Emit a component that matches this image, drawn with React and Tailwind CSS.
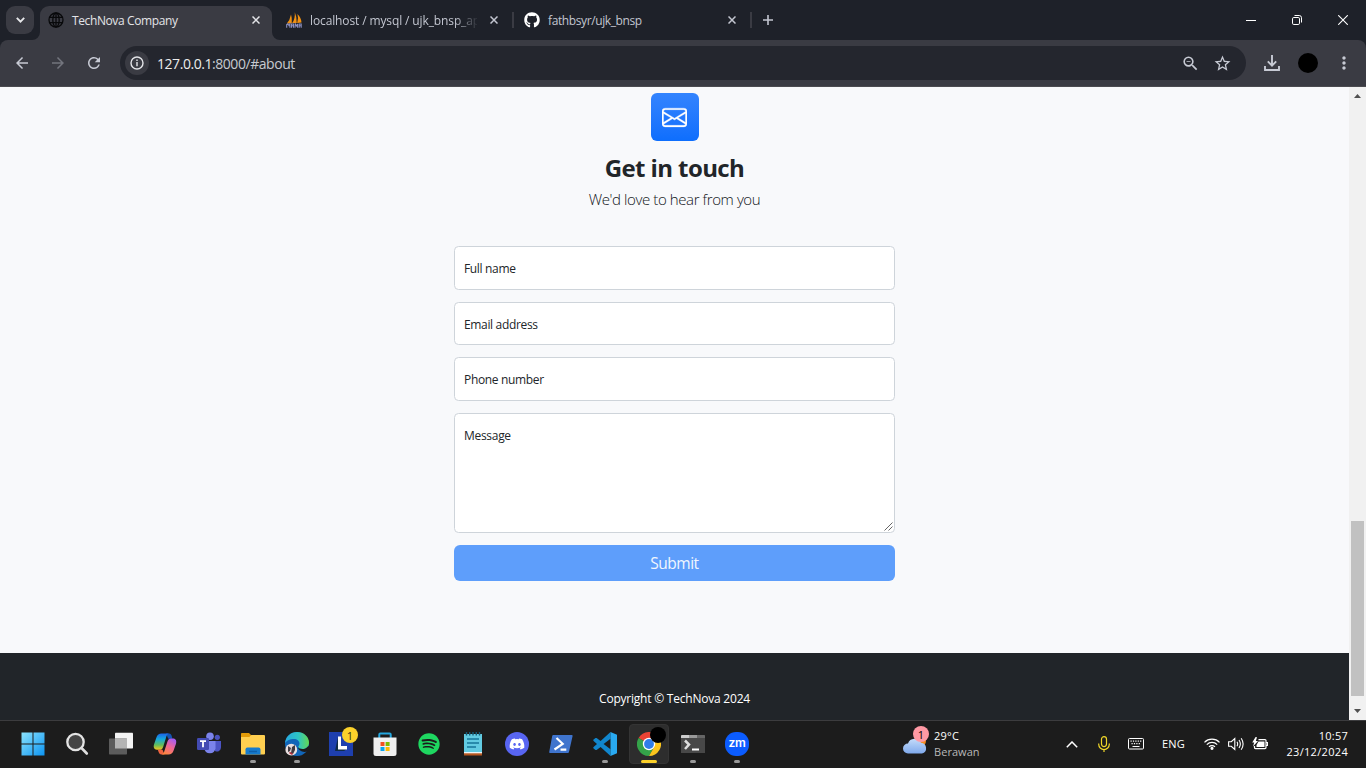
import React from 'react';
import { MdArrowBack, MdArrowForward, MdRefresh, MdZoomOut, MdStarBorder, MdMoreVert } from 'react-icons/md';
import { BsEnvelope } from 'react-icons/bs';
import { FaGithub, FaSpotify, FaDiscord } from 'react-icons/fa';

function Close({ className = '' }) {
  return (
    <svg className={`size-2 shrink-0 ${className}`} viewBox="0 0 8 8" stroke="currentColor" strokeWidth="1.5">
      <path d="M.5 .5l7 7M7.5 .5l-7 7" />
    </svg>
  );
}

function TabStrip() {
  return (
    <div className="flex h-10 items-start bg-[#1e2129] text-[12px] text-[#c3c6d0]">
      <div className="ml-[6px] mt-[6px] flex size-7 items-center justify-center rounded-[9px] bg-[#3a3b43]">
        <svg className="h-[6px] w-[9px]" viewBox="0 0 9 6" fill="none" stroke="#e6e7ea" strokeWidth="1.9"><path d="M.8 .9l3.7 3.7L8.2 .9" /></svg>
      </div>
      <div className="flex h-10 w-[244px] items-end pt-[6px] ml-[-2px]">
        <svg className="size-2 shrink-0" viewBox="0 0 8 8" fill="#3a3b43"><path d="M8 0v8H0a8 8 0 0 0 8-8z" /></svg>
        <div className="flex h-[34px] w-[232px] shrink-0 items-center rounded-t-[9px] bg-[#3a3b43] pb-[6px] pl-2 pr-3 text-[#e3e4e8]">
          <svg className="size-4 shrink-0" viewBox="0 0 16 16" fill="none" stroke="#08090b" strokeWidth="1.3">
            <circle cx="8" cy="8" r="7" /><ellipse cx="8" cy="8" rx="3.2" ry="7" /><path d="M8 1v14M1.6 5.4h12.8M1.6 10.6h12.8" />
          </svg>
          <span className="ml-2 mt-px whitespace-nowrap tracking-[-0.39px]">TechNova Company</span>
          <Close className="ml-auto" />
        </div>
        <svg className="size-2 shrink-0" viewBox="0 0 8 8" fill="#3a3b43"><path d="M0 0v8h8a8 8 0 0 1-8-8z" /></svg>
      </div>
      <div className="ml-[10px] flex h-10 w-[228px] items-center">
        <svg className="h-4 w-4 shrink-0" viewBox="0 0 16 16">
          <path d="M.8 11.500Q4 8 5 2.500Q6.200 6 5.800 11.200zM6.200 11Q9.300 7 8.800 .3Q11 5 10.700 11zM11.200 11Q12.800 6 11.400 2Q15 5 15.500 10.500z" fill="#f29111" />
          <path d="M.7 15.800v-3.300l1.200-.7 1 1.700 1-1.700v4M5.500 15.800v-3.800h2v3.800M5.500 13.800h2M9 15.800l.3-3.800 1.300 2 1-2v3.800M13.200 15.800v-3.800h2v3.800M13.200 13.800h2" fill="none" stroke="#8a8fc0" strokeWidth="1.100" />
        </svg>
        <span className="ml-2 mt-px w-[167px] whitespace-nowrap tracking-[-0.12px] [mask-image:linear-gradient(to_right,black_145px,transparent_169px)]">localhost / mysql / ujk_bnsp_ap</span>
        <Close className="ml-[13px]" />
        <div className="ml-[14px] h-4 w-[2px] bg-[#3a3b43]" />
      </div>
      <div className="ml-[10px] flex h-10 w-[228px] items-center">
        <FaGithub className="size-4 shrink-0 text-white" />
        <span className="ml-2 mt-px whitespace-nowrap tracking-[-0.39px]">fathbsyr/ujk_bnsp</span>
        <Close className="ml-auto" />
        <div className="ml-[14px] h-4 w-[2px] bg-[#3a3b43]" />
      </div>
      <svg className="ml-[11px] mt-[15px] size-[10px]" viewBox="0 0 10 10" stroke="#c3c6d0" strokeWidth="1.6"><path d="M5 0v10M0 5h10" /></svg>
      <div className="ml-auto flex h-10 items-center text-white">
        <div className="flex w-[46px] justify-center"><div className="h-px w-[10px] bg-white" /></div>
        <div className="flex w-[46px] justify-center">
          <svg className="size-[10px]" viewBox="0 0 10 10" fill="none" stroke="white"><rect x=".5" y="2.500" width="7" height="7" rx="1.300" /><path d="M2.500 .5h4.700a2.300 2.300 0 0 1 2.300 2.300v4.700" /></svg>
        </div>
        <div className="flex w-[46px] justify-center">
          <svg className="size-[10px]" viewBox="0 0 10 10" stroke="white" strokeWidth="1.1"><path d="M.2 .2l9.600 9.600M9.800 .2l-9.600 9.600" /></svg>
        </div>
      </div>
    </div>
  );
}

function Toolbar() {
  return (
    <div className="bg-[#1e2129]">
      <div className="flex h-[47px] items-center rounded-t-[8px] border-b border-[#4b4b50] bg-[#3a3b43] text-[#c7cad4]">
        <MdArrowBack className="ml-[13px] size-[18px]" />
        <MdArrowForward className="ml-[18px] size-[18px] text-[#73757e]" />
        <MdRefresh className="ml-[18px] size-[18px]" />
        <div className="ml-[17px] flex h-[34px] w-[1126px] items-center rounded-full bg-[#24262e] pl-[5px]">
          <div className="flex size-6 items-center justify-center rounded-full bg-[#3a3b43]">
            <svg className="size-[14px]" viewBox="0 0 14 14" fill="none" stroke="#e3e4e8" strokeWidth="1.4"><circle cx="7" cy="7" r="6" /><path d="M7 6v4.2M7 3.6v1.5" /></svg>
          </div>
          <span className="ml-2 whitespace-nowrap text-[14px] tracking-[-0.45px] text-[#c7cad0]"><span className="text-[#eceded]">127.0.0.1</span>:8000/#about</span>
          <MdZoomOut className="ml-auto size-[19px]" />
          <MdStarBorder className="ml-[13px] mr-[14px] size-[19px]" />
        </div>
        <svg className="ml-[18px] size-4" viewBox="0 0 16 16" fill="none" stroke="currentColor" strokeWidth="1.9"><path d="M8 0v10.3M3.8 6.4L8 10.6l4.2-4.2M1 11v4h14v-4" /></svg>
        <div className="ml-[18px] size-5 rounded-full bg-black" />
        <MdMoreVert className="ml-[16px] size-5" />
      </div>
    </div>
  );
}

function Field({ label, className }) {
  return <div className={`w-full rounded-[4.5px] border border-[#ced4da] bg-white pl-[9px] text-[12px] tracking-[-0.34px] text-[#212529] ${className}`}>{label}</div>;
}

function Page() {
  return (
    <div className="flex h-[633px] bg-[#f8f9fa]">
      <main className="flex w-[1349px] flex-col">
        <section className="flex h-[566px] flex-col items-center bg-[#f8f9fb] pt-[6px]">
          <div className="flex size-12 items-center justify-center rounded-[6px] bg-gradient-to-b from-[#3384fe] to-[#0d6efd]">
            <BsEnvelope className="size-[25px] stroke-white text-white [stroke-width:0.2]" />
          </div>
          <h1 className="mt-[13px] h-7 whitespace-nowrap text-[24px] font-bold leading-7 tracking-[-0.6px] text-[#212529]">Get in touch</h1>
          <p className="mt-[7px] h-5 whitespace-nowrap text-[15px] font-light leading-5 tracking-[-0.4px] text-[#101418]">We'd love to hear from you</p>
          <div className="mt-[37px] flex w-[441px] flex-col">
            <Field label="Full name" className="h-11 leading-[44px]" />
            <Field label="Email address" className="mt-3 h-[43px] leading-[44px]" />
            <Field label="Phone number" className="mt-3 h-11 leading-[44px]" />
            <div className="mt-3 flex h-[120px] items-start rounded-[4.5px] border border-[#ced4da] bg-white pl-[9px] text-[12px] leading-[44px] tracking-[-0.3px] text-[#212529]">
              Message
              <svg className="ml-auto mr-px mb-px size-[9px] self-end" viewBox="0 0 9 9" stroke="#666" strokeWidth="1"><path d="M.5 8.5l8-8M4.5 8.5l4-4" /></svg>
            </div>
            <button className="mt-3 h-9 rounded-[6px] bg-[#5e9efb] text-[15.5px] leading-9 tracking-[-0.5px] text-[#f0f6fe]">Submit</button>
          </div>
        </section>
        <footer className="flex h-[67px] justify-center bg-[#212529] pt-[37px] text-[12px] leading-[18px] text-white">
          <span className="whitespace-nowrap tracking-[-0.22px]">Copyright © TechNova 2024</span>
        </footer>
      </main>
      <div className="flex w-[17px] flex-col items-center bg-[#f1f1f1]">
        <svg className="mt-[7px] h-1 w-[7px]" viewBox="0 0 7 4" fill="#505050"><path d="M0 4L3.5 0 7 4z" /></svg>
        <div className="mt-[423px] h-[175px] w-[13px] bg-[#c1c1c1]" />
        <svg className="mt-[13px] h-1 w-[7px]" viewBox="0 0 7 4" fill="#505050"><path d="M0 0L3.5 4 7 0z" /></svg>
      </div>
    </div>
  );
}

function TaskbarApp({ children, dot, active }) {
  return (
    <div className="relative flex h-[47px] w-11 items-center justify-center pb-px">
      {active && <div className="absolute left-[2px] top-[3px] h-10 w-10 rounded-[4px] border border-[#343434] bg-[#2d2d2d]" />}
      <div className="relative flex size-6 items-center justify-center">{children}</div>
      {dot && <div className="absolute left-[19px] top-[39px] h-[3px] w-[6px] rounded-full bg-[#9a9a9a]" />}
      {active && <div className="absolute left-[14px] top-[39px] h-[3px] w-4 rounded-full bg-[#fcd12a]" />}
    </div>
  );
}

function TaskbarApps() {
  return (
    <div className="flex pl-[11px]">
      <TaskbarApp>
        <svg className="size-6" viewBox="0 0 24 24">
          <defs><linearGradient id="win" x1="0" y1="0" x2="1" y2="1" gradientUnits="objectBoundingBox"><stop stopColor="#8be3fd" /><stop offset="1" stopColor="#0c94f2" /></linearGradient></defs>
          <path fill="url(#win)" d="M.5 .5H11.5V11.5H.5zM12.5 .5H23.5V11.5H12.5zM.5 12.5H11.5V23.5H.5zM12.5 12.5H23.5V23.5H12.5z" />
        </svg>
      </TaskbarApp>
      <TaskbarApp>
        <svg className="size-6" viewBox="0 0 24 24"><circle cx="10.5" cy="10" r="8.2" fill="#454545" stroke="#e4e4e4" strokeWidth="2.3" /><path d="M16.5 16l5.3 5.5" stroke="#dedede" strokeWidth="2.6" strokeLinecap="round" /></svg>
      </TaskbarApp>
      <TaskbarApp>
        <svg className="size-6" viewBox="0 0 24 24"><rect x="6" y=".7" width="18" height="15.8" rx=".7" fill="#f3f3f3" /><rect x="0" y="6.5" width="18" height="16" rx=".7" fill="#5c5c5c" /><path d="M6 6.5h12v10H6z" fill="#b4b4b4" /></svg>
      </TaskbarApp>
      <TaskbarApp>
        <svg className="size-6" viewBox="0 0 24 24">
          <defs>
            <linearGradient id="coa" x1="0" y1="0" x2="0" y2="1"><stop stopColor="#1b63e8" /><stop offset=".35" stopColor="#15a9dc" /><stop offset=".7" stopColor="#60bd5c" /><stop offset="1" stopColor="#f7c61e" /></linearGradient>
            <linearGradient id="cob" x1=".7" y1="0" x2=".2" y2="1"><stop stopColor="#a65cf0" /><stop offset=".45" stopColor="#ee6599" /><stop offset="1" stopColor="#ff8838" /></linearGradient>
          </defs>
          <path d="M13 1.5h3.2c1.4 0 2 1 2.5 2.5l.8 2.7h-4.2z" fill="#1554b6" />
          <path d="M8.5 1.5h7.3c-1.8.8-2.3 2.5-2.9 4.5l-2.7 8.7c-.6 2-1.4 3.1-3.5 3.1H4c-2.9 0-3.8-2.5-3-5.2L3.6 5C4.4 2.7 6 1.5 8.5 1.5z" fill="url(#coa)" />
          <path d="M11.5 22.5H8.4c-1.5 0-2.3-1-2.8-2.5l-.8-2.3h4.7z" fill="#ef6340" />
          <path d="M15.5 22.5H8.8c1.8-.8 2.3-2.5 2.9-4.5l2.7-8.2c.6-2 1.4-3.3 3.5-3.3H20c2.9 0 3.8 2.5 3 5.2L20.4 19c-.8 2.3-2.4 3.5-4.9 3.5z" fill="url(#cob)" />
        </svg>
      </TaskbarApp>
      <TaskbarApp>
        <svg className="size-6" viewBox="0 0 24 24">
          <circle cx="20.3" cy="5.3" r="2.6" fill="#4a52bd" /><path d="M17 9h7v6.5a4 4 0 0 1-6 3.5z" fill="#4c54c4" />
          <circle cx="13" cy="4.3" r="3.8" fill="#7b83eb" /><path d="M8 9h10.5v7.2a5.7 5.7 0 0 1-11.3 0z" fill="#7b83eb" />
          <rect x="0" y="6" width="12" height="12" rx="1.2" fill="#434bb3" /><path d="M3 9.2h6M6 9v6.2" stroke="white" strokeWidth="1.8" />
        </svg>
      </TaskbarApp>
      <TaskbarApp dot>
        <svg className="size-6" viewBox="0 0 24 24">
          <path d="M0 1.7Q0 1 .8 1H8l2 2v4H0z" fill="#e39b09" /><path d="M0 5h8.3l2-2H23q1 0 1 1v17.4q0 1-1 1H1q-1 0-1-1z" fill="#ffcf50" />
          <path d="M4.5 22.4v-5q0-1.9 1.9-1.9h11.2q1.9 0 1.9 1.9v5z" fill="#167bcd" /><path d="M8 19.5h8" stroke="#0d5faa" strokeWidth="1.4" />
        </svg>
      </TaskbarApp>
      <TaskbarApp dot>
        <svg className="size-6" viewBox="0 0 24 24">
          <defs><linearGradient id="edge" x1="0" x2="1"><stop stopColor="#27a9df" /><stop offset=".55" stopColor="#2dc4c5" /><stop offset="1" stopColor="#63d852" /></linearGradient></defs>
          <circle cx="12" cy="12" r="12" fill="#1165b8" />
          <path d="M0 11.5C.5 4.500 5.500 0 12 0c7 0 12 5 12 10.500 0 4-3 6.500-6.500 6.500-3 0-4.300-1-4.300-2 0-.8 1.300-1.500 1.300-3.500 0-2.500-2.500-4.500-5.500-4.500C4.500 7 1 9 0 11.500z" fill="url(#edge)" />
          <path d="M13.200 15c.3 1.200 1.800 2 4.300 2 2.200 0 4.200-.9 5.500-2.600l1-.4v4.500l-2 1c-4 1.500-9.300-1.500-8.800-4.500z" fill="#1c1c1c" />
          <circle cx="6.300" cy="17.700" r="5.900" fill="#e8dfdf" /><path d="M3 14l3 2-1 3-2 1zM7 15l3-2v5l-2 4-2-1z" fill="#413a40" /><path d="M4.500 20.500l3 1.800" stroke="#b32735" strokeWidth="1.500" />
        </svg>
      </TaskbarApp>
      <TaskbarApp>
        <div className="relative size-6 bg-[#1e3fae]">
          <svg className="size-6" viewBox="0 0 24 24"><path d="M9 5L6 19l9 0 3-2H11z" fill="#102c46" /><path d="M9 4.500h3V14h6v3.500H9z" fill="white" /></svg>
          <div className="absolute left-[13px] top-[-5px] flex size-4 items-center justify-center rounded-full bg-[#fbd12b] text-[11px] leading-none text-[#342f17]">1</div>
        </div>
      </TaskbarApp>
      <TaskbarApp>
        <svg className="size-6" viewBox="0 0 24 24"><path d="M6.300 6V2.500q0-1 1-1h9.400q1 0 1 1V6" fill="none" stroke="#24a7df" strokeWidth="2" /><path d="M.5 5.500h23v16q0 2.500-2.500 2.500H3Q.5 24 .5 21.500z" fill="#f0f0f0" /><path d="M7.500 10H11.500V14H7.500z" fill="#f25022" /><path d="M12.600 10H16.600V14H12.600z" fill="#7fba00" /><path d="M7.500 15H11.500V19H7.500z" fill="#0aa4ee" /><path d="M12.600 15H16.600V19H12.600z" fill="#ffb900" /></svg>
      </TaskbarApp>
      <TaskbarApp><FaSpotify className="size-[22px] text-[#1ed760]" /></TaskbarApp>
      <TaskbarApp>
        <svg className="size-6" viewBox="0 0 24 24"><path d="M3 2h18v19H3z" fill="#62cbe2" /><path d="M3 21h18v2.500H3z" fill="#b8571f" /><path d="M3 20h18v1.300H3z" fill="#eaf5f8" /><path d="M5.500 0v3.500M8.700 0v3.500M12 0v3.500M15.300 0v3.500M18.500 0v3.500" stroke="#155c78" strokeWidth="1.400" /><path d="M6 7h12M6 11h12M6 15h9" stroke="#17779b" strokeWidth="1.600" /></svg>
      </TaskbarApp>
      <TaskbarApp><div className="flex size-6 items-center justify-center rounded-full bg-[#5865f2]"><FaDiscord className="size-4 text-white" /></div></TaskbarApp>
      <TaskbarApp>
        <svg className="size-6" viewBox="0 0 24 24"><path d="M4.200 3h18.600q1 0 .8 1l-3.600 16q-.2 1-1.200 1H1q-1 0-.8-1L3.200 4q.2-1 1-1z" fill="#3f74cd" /><path d="M7.500 6l6.200 5.800L5.500 17.500M11.500 17.700h5.800" fill="none" stroke="white" strokeWidth="2.200" /></svg>
      </TaskbarApp>
      <TaskbarApp dot>
        <svg className="size-6" viewBox="0 0 24 24"><path fillRule="evenodd" d="M17.500 0L7.600 9.100 3.600 6.100q-.6-.4-1.100 0L.6 7.600q-.7.700 0 1.400L4 12 .6 15q-.7.700 0 1.400l1.900 1.500q.5.400 1.100 0l4-3L17.500 24zM17.500 6.700v10.600L10.600 12z" fill="#1186cd" /><path d="M17.500 0L24 2.800v18.400L17.500 24z" fill="#29aaf1" /></svg>
      </TaskbarApp>
      <TaskbarApp active>
        <svg className="size-6" viewBox="0 0 24 24">
          <path d="M12 12L1.600 6A12 12 0 0 1 22.400 6z" fill="#ea4335" /><path d="M12 12L1.600 6A12 12 0 0 0 12 24L17.200 15z" fill="#34a349" /><path d="M12 6h10.400A12 12 0 0 1 12 24l5.200-9z" fill="#fbc51d" />
          <circle cx="12" cy="12" r="6.200" fill="white" /><circle cx="12" cy="12" r="4.900" fill="#2f7de9" />
        </svg>
        <div className="absolute left-[13px] top-[-5px] size-4 rounded-full bg-black" />
      </TaskbarApp>
      <TaskbarApp dot>
        <svg className="size-6" viewBox="0 0 24 24"><path d="M0 4q0-1 1-1h22q1 0 1 1v17H0z" fill="#484848" /><path d="M1 3h7v3H0V4q0-1 1-1z" fill="#ccc" /><path d="M8 3h8v3H8z" fill="#999" /><path d="M16 3h7q1 0 1 1v2h-8z" fill="#666" /><path d="M4 8.500l4 4-4 4.500" fill="none" stroke="#ddd" strokeWidth="2.500" /><path d="M11 17.500h7" stroke="white" strokeWidth="2" /></svg>
      </TaskbarApp>
      <TaskbarApp dot>
        <div className="flex size-6 items-center justify-center rounded-[11px] bg-[#0b5cff] pb-[2px] font-[Inter] text-[12px] font-semibold leading-none tracking-[-0.3px] text-white">zm</div>
      </TaskbarApp>
    </div>
  );
}

function Taskbar() {
  return (
    <div className="flex h-12 border-t border-[#3c3c3e] bg-[#1c1c1c] text-[11px] text-white">
      <TaskbarApps />
      <div className="relative ml-[143px] mt-[11px] size-[27px] shrink-0">
        <svg className="size-[27px]" viewBox="0 0 27 27">
          <defs><linearGradient id="cloud" x1="0" y1="0" x2="0" y2="1"><stop stopColor="#c4dcfa" /><stop offset="1" stopColor="#7fa9ec" /></linearGradient></defs>
          <circle cx="18" cy="9" r="6" fill="#f58c1e" /><path d="M6 21.500a5 5 0 0 1 0-10 7 7 0 0 1 13-.8 5.500 5.500 0 0 1 1 10.800z" fill="url(#cloud)" />
        </svg>
        <div className="absolute left-[11px] top-[-6px] flex size-4 items-center justify-center rounded-full bg-[#ff99a4] text-[11px] leading-none text-black">1</div>
      </div>
      <div className="ml-[5px] mt-[7px] flex w-[60px] flex-col leading-4"><span className="tracking-[0.2px]">29°C</span><span className="tracking-[0.05px] text-[#b8b8b8]">Berawan</span></div>
      <div className="ml-auto flex h-[47px] items-center pb-px">
        <svg className="h-[7px] w-3" viewBox="0 0 12 7" fill="none" stroke="white" strokeWidth="1.500"><path d="M.8 6.200L6 1l5.200 5.200" /></svg>
        <svg className="ml-5 h-4 w-3" viewBox="0 0 12 16" fill="none" stroke="#efd629" strokeWidth="1.200"><rect x="3.500" y=".6" width="5" height="10" rx="2.500" /><path d="M.7 7.500v.8a5.300 5.300 0 0 0 10.600 0v-.8M6 13.500V16" /></svg>
        <svg className="ml-[18px] h-3 w-4" viewBox="0 0 16 12" fill="none" stroke="white"><rect x=".5" y=".5" width="15" height="10.500" rx="1" /><path d="M2.500 3.200h11M3.500 5.700h9" strokeDasharray="1.200 1.200" strokeWidth="1.200" /><path d="M4.500 8.500h7" /></svg>
        <span className="ml-[18px] mt-px w-6 whitespace-nowrap tracking-[0.2px]">ENG</span>
        <svg className="ml-[18px] h-3 w-4" viewBox="0 0 16 12" fill="none" stroke="white" strokeWidth="1.200"><path d="M.5 4.300a10.500 10.500 0 0 1 15 0M2.800 6.600a7.300 7.300 0 0 1 10.400 0M5 8.900a4.200 4.200 0 0 1 6 0" /><circle cx="8" cy="10.300" r="1" fill="white" /></svg>
        <svg className="ml-2 h-[14px] w-4" viewBox="0 0 16 14" fill="none" stroke="white" strokeWidth="1.100"><path d="M.6 4.700h2.700L6.800 1.500v11L3.300 9.300H.6zM9 4.800q1.300 2.200 0 4.400M11 3q2.700 4 0 8M13.200 1.200q3.800 5.800 0 11.600" /></svg>
        <svg className="ml-2 h-[14px] w-4" viewBox="0 0 16 14" fill="none" stroke="white" strokeWidth="1.200"><path d="M6.500 2.600H13q1 0 1 1v7q0 1-1 1H3.500q-1 0-1-1V9M14 5.500h1.500v3H14" /><path d="M6.500 4.500h6v5.500H4.500V8z" fill="white" stroke="none" /><path d="M3.600 0L.2 5.500h2L1 9.500l5-5.500H3.800L5 .3z" fill="white" stroke="none" /></svg>
        <div className="ml-[17px] mr-[18px] flex w-[63px] flex-col items-end whitespace-nowrap leading-4 tracking-[0.32px]"><span className="tracking-[0.25px]">10:57</span><span>23/12/2024</span></div>
      </div>
    </div>
  );
}

export default function App() {
  return (
    <div className="h-[768px] w-[1366px] overflow-hidden font-['Open_Sans','Noto_Sans',sans-serif]">
      <TabStrip />
      <Toolbar />
      <Page />
      <Taskbar />
    </div>
  );
}
